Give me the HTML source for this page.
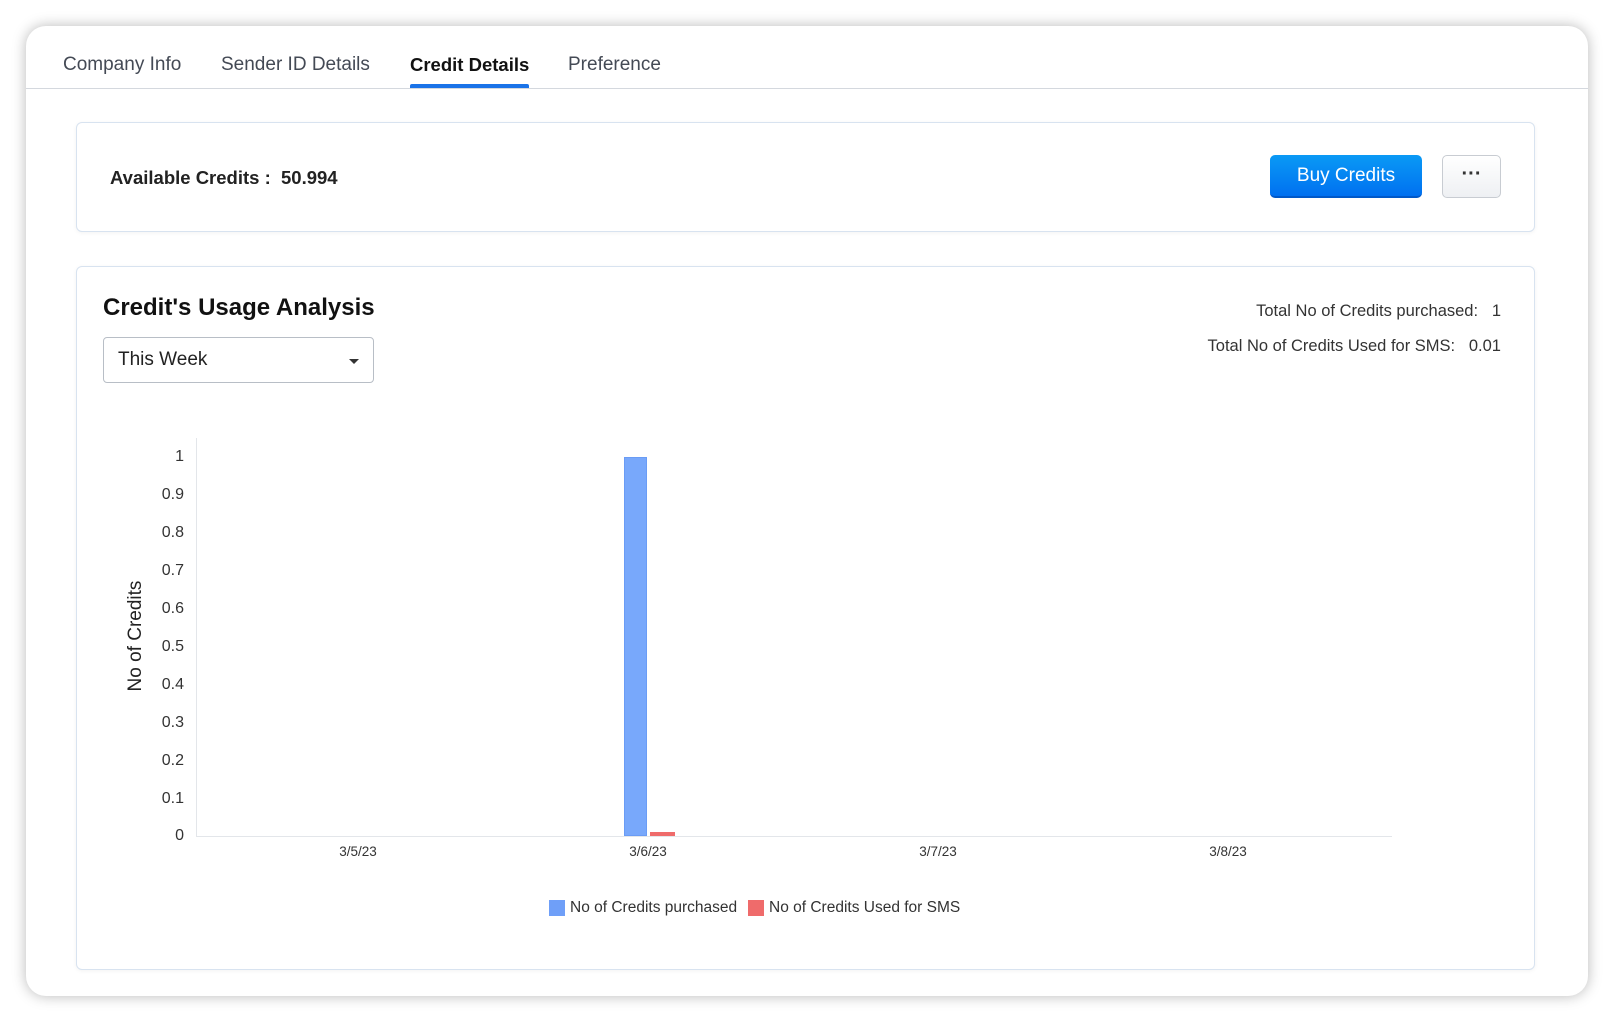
<!DOCTYPE html>
<html><head><meta charset="utf-8"><style>
*{margin:0;padding:0;box-sizing:border-box}
body{width:1614px;height:1022px;background:#fff;position:relative;overflow:hidden;font-family:"Liberation Sans",sans-serif;color:#1f2430}
.card{position:absolute;left:26px;top:26px;width:1562px;height:970px;border-radius:20px;background:#fff;box-shadow:0 0 14px rgba(0,0,0,.28)}
.a{position:absolute;white-space:nowrap}
.tab{top:54px;font-size:19px;color:#444a55}
.box{position:absolute;border:1px solid #d8e3f0;border-radius:6px;background:#fff;box-shadow:0 1px 4px rgba(0,0,0,.05)}
.yl{position:absolute;right:1430px;font-size:16px;color:#333;text-align:right;width:40px}
.xl{position:absolute;top:844px;font-size:13.5px;color:#333;transform:translateX(-50%)}
</style></head><body>
<div class="card"></div>
<div class="a tab" style="left:63px">Company Info</div>
<div class="a tab" style="left:221px">Sender ID Details</div>
<div class="a tab" style="left:410px;color:#111;font-weight:bold;font-size:18.5px;top:54px">Credit Details</div>
<div class="a" style="left:410px;top:84px;width:119px;height:4px;background:#1a73e8;border-radius:2px 2px 0 0"></div>
<div class="a tab" style="left:568px">Preference</div>
<div class="a" style="left:26px;top:88px;width:1562px;height:1px;background:#d4d8de"></div>

<div class="box" style="left:76px;top:122px;width:1459px;height:110px"></div>
<div class="a" style="left:110px;top:167px;font-size:18.5px;font-weight:bold;color:#222">Available Credits :&nbsp; 50.994</div>
<div class="a" style="left:1270px;top:155px;width:152px;height:43px;border-radius:5px;background:linear-gradient(#0a9af5,#0070f0);border-bottom:2px solid #0058c8;color:#fff;font-size:19px;text-align:center;line-height:41px">Buy Credits</div>
<div class="a" style="left:1442px;top:155px;width:59px;height:43px;border-radius:5px;background:linear-gradient(#fff,#eef0f3);border:1px solid #c8ccd2;text-align:center;line-height:36px;font-size:20px;font-weight:bold;color:#333">···</div>

<div class="box" style="left:76px;top:266px;width:1459px;height:704px"></div>
<div class="a" style="left:103px;top:294px;font-size:24px;font-weight:bold;color:#111">Credit's Usage Analysis</div>
<div class="a" style="left:103px;top:337px;width:271px;height:46px;border:1px solid #b8bec6;border-radius:4px;font-size:19px;line-height:44px;padding-left:14px;color:#222">This Week
<div style="position:absolute;right:14px;top:21px;width:0;height:0;border-left:5px solid transparent;border-right:5px solid transparent;border-top:5px solid #333"></div></div>
<div class="a" style="right:113px;top:302px;font-size:16.5px;color:#333">Total No of Credits purchased:&nbsp;&nbsp; 1</div>
<div class="a" style="right:113px;top:337px;font-size:16.5px;color:#333">Total No of Credits Used for SMS:&nbsp;&nbsp; 0.01</div>

<div class="a" style="left:196px;top:438px;width:1px;height:399px;background:#e3e6ea"></div>
<div class="a" style="left:196px;top:836px;width:1196px;height:1px;background:#e3e6ea"></div>
<div class="yl" style="top:448px">1</div>
<div class="yl" style="top:486px">0.9</div>
<div class="yl" style="top:524px">0.8</div>
<div class="yl" style="top:562px">0.7</div>
<div class="yl" style="top:600px">0.6</div>
<div class="yl" style="top:638px">0.5</div>
<div class="yl" style="top:676px">0.4</div>
<div class="yl" style="top:714px">0.3</div>
<div class="yl" style="top:752px">0.2</div>
<div class="yl" style="top:790px">0.1</div>
<div class="yl" style="top:827px">0</div>
<div class="a" style="left:136px;top:636px;transform:translate(-50%,-50%) rotate(-90deg);font-size:19px;color:#222">No of Credits</div>
<div class="a" style="left:624px;top:457px;width:23px;height:379px;background:#78a8fb;border:1px solid #6a9cf5"></div>
<div class="a" style="left:650px;top:832px;width:25px;height:4px;background:#ef6b6b"></div>
<div class="xl" style="left:358px">3/5/23</div>
<div class="xl" style="left:648px">3/6/23</div>
<div class="xl" style="left:938px">3/7/23</div>
<div class="xl" style="left:1228px">3/8/23</div>
<div class="a" style="left:549px;top:900px;width:16px;height:16px;background:#6f9ff8"></div>
<div class="a" style="left:570px;top:899px;font-size:15.5px;color:#333">No of Credits purchased</div>
<div class="a" style="left:748px;top:900px;width:16px;height:16px;background:#ef6b6b"></div>
<div class="a" style="left:769px;top:899px;font-size:15.5px;color:#333">No of Credits Used for SMS</div>
</body></html>
